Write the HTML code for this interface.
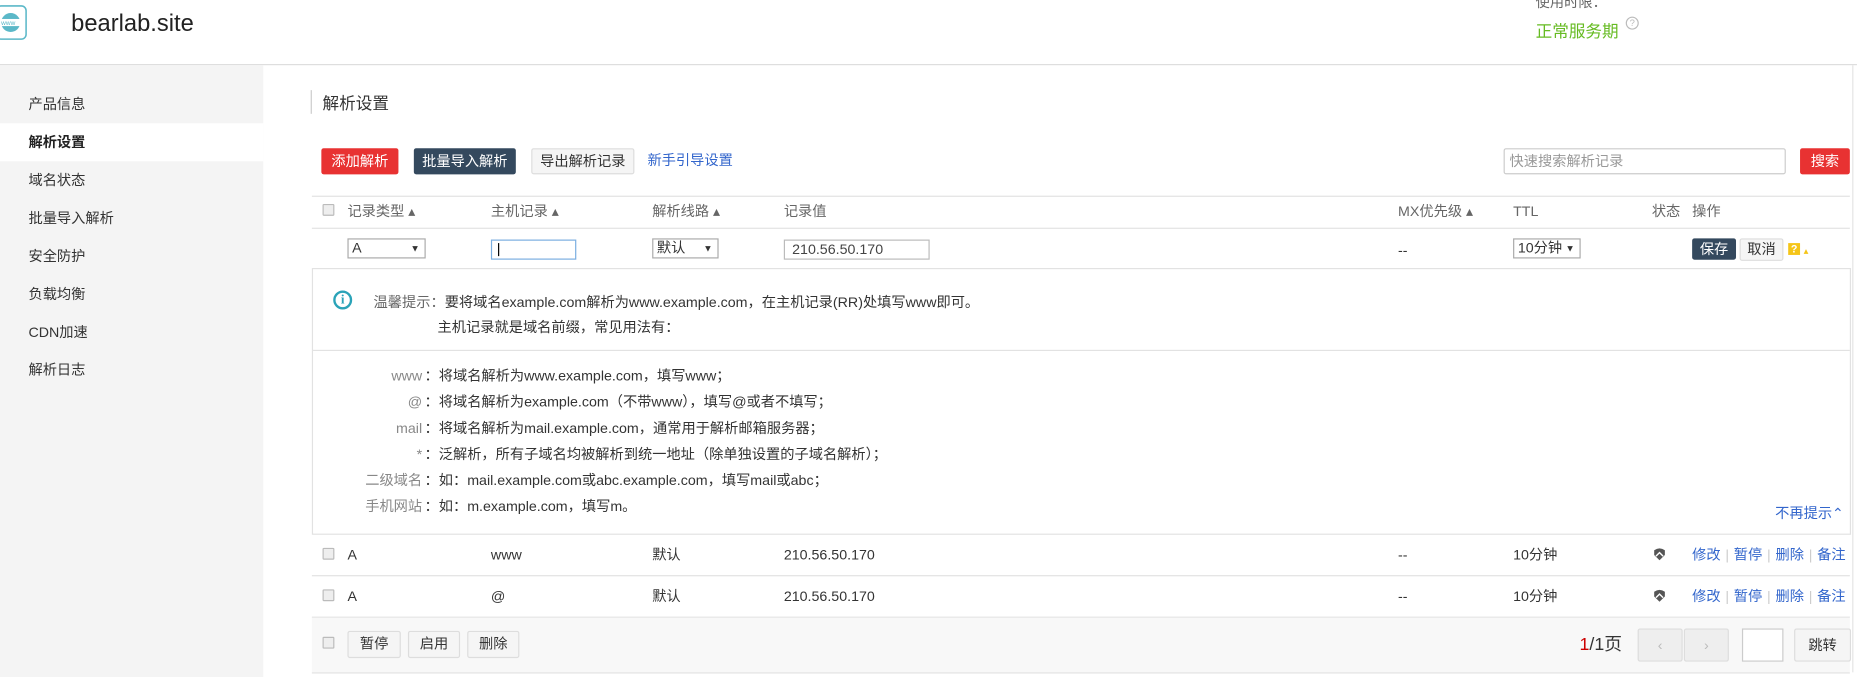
<!DOCTYPE html>
<html><head><meta charset="utf-8">
<style>
html,body{margin:0;padding:0;width:1857px;height:677px;overflow:hidden;background:#fff}
#w{position:absolute;left:0;top:0;width:1566px;height:571px;transform:scale(1.1858);transform-origin:0 0;font-family:"Liberation Sans","Noto Sans CJK SC",sans-serif;font-size:12px;line-height:16px;color:#333}
.a{position:absolute;white-space:nowrap}
.btn{position:absolute;height:22px;line-height:22px;text-align:center;border-radius:2px;font-size:12px}
.sel{position:absolute;height:15px;border:1px solid #aaa;background:#fff;font-size:12px;line-height:15px;padding-left:3px;box-sizing:content-box}
.sel:after{content:"▼";position:absolute;right:4px;top:0;font-size:8px}
.cb{position:absolute;width:8px;height:8px;border:1px solid #bbb;background:#eee;border-radius:1px}
.hl{position:absolute;left:263px;width:1297px;height:1px;background:#e2e2e2}
.g{color:#666}
.lk{color:#3366cc}
.sep{color:#ccc;margin:0 4px}
</style></head><body><div id="w">
<svg class="a" style="left:0;top:4px" width="24" height="30" viewBox="0 0 24 30"><rect x="-3" y="1" width="25" height="28" rx="4" fill="none" stroke="#5bb8c8" stroke-width="1.3"/><circle cx="9" cy="15" r="8" fill="#5bb8c8"/><rect x="0" y="12" width="18" height="6" fill="#fff"/><text x="1" y="17.3" font-size="5.5" fill="#5bb8c8" font-family="Liberation Sans">www</text></svg>
<div class="a" style="left:60px;top:8px;font-size:20px;line-height:24px;color:#222">bearlab.site</div>
<div class="a" style="left:1295px;top:-6px;font-size:12px;color:#666">使用时限：</div>
<div class="a" style="left:1295px;top:16px;font-size:14px;line-height:20px;color:#66bb22">正常服务期</div>
<div class="a" style="left:1371px;top:14px;width:9px;height:9px;border:1px solid #bbb;border-radius:50%;font-size:8px;line-height:9px;text-align:center;color:#bbb">?</div>
<div class="a" style="left:0;top:54px;width:1566px;height:1px;background:#ddd"></div>
<div class="a" style="left:0;top:55px;width:222px;height:516px;background:#f4f4f4"></div>
<div class="a" style="left:0;top:104px;width:222px;height:32px;background:#fff"></div>
<div class="a" style="left:24px;top:80px">产品信息</div>
<div class="a" style="left:24px;top:112px;font-weight:bold;color:#222">解析设置</div>
<div class="a" style="left:24px;top:144px">域名状态</div>
<div class="a" style="left:24px;top:176px">批量导入解析</div>
<div class="a" style="left:24px;top:208px">安全防护</div>
<div class="a" style="left:24px;top:240px">负载均衡</div>
<div class="a" style="left:24px;top:272px">CDN加速</div>
<div class="a" style="left:24px;top:304px">解析日志</div>
<div class="a" style="left:1562px;top:55px;width:1px;height:512px;background:#e5e5e5"></div>
<div class="a" style="left:262px;top:76px;width:1px;height:20px;background:#ccc"></div>
<div class="a" style="left:272px;top:77px;font-size:14px;line-height:20px;color:#333">解析设置</div>
<div class="btn" style="left:271px;top:125px;width:65px;background:#e83232;color:#fff">添加解析</div>
<div class="btn" style="left:349px;top:125px;width:86px;background:#34495e;color:#fff">批量导入解析</div>
<div class="btn" style="left:448px;top:125px;width:85px;height:20px;line-height:20px;background:#f5f5f5;border:1px solid #ddd">导出解析记录</div>
<div class="a lk" style="left:546px;top:127px">新手引导设置</div>
<div class="a" style="left:1268px;top:125px;width:238px;border:1px solid #ccc;border-radius:2px;color:#999;line-height:20px;padding-left:4px;box-sizing:border-box;height:22px">快速搜索解析记录</div>
<div class="btn" style="left:1518px;top:125px;width:42px;background:#e83232;color:#fff">搜索</div>
<div class="hl" style="top:165px"></div>
<div class="cb" style="left:272px;top:172px"></div>
<div class="a g" style="left:293px;top:170px">记录类型 ▴</div>
<div class="a g" style="left:414px;top:170px">主机记录 ▴</div>
<div class="a g" style="left:550px;top:170px">解析线路 ▴</div>
<div class="a g" style="left:661px;top:170px">记录值</div>
<div class="a g" style="left:1179px;top:170px">MX优先级 ▴</div>
<div class="a g" style="left:1276px;top:170px">TTL</div>
<div class="a g" style="left:1393px;top:170px">状态</div>
<div class="a g" style="left:1427px;top:170px">操作</div>
<div class="hl" style="top:192px"></div>
<div class="sel" style="left:293px;top:201px;width:61px">A</div>
<div class="a" style="left:414px;top:202px;width:70px;height:15px;border:1px solid #7aaee0"><div style="position:absolute;left:5px;top:2px;width:1px;height:11px;background:#000"></div></div>
<div class="sel" style="left:550px;top:201px;width:51px">默认</div>
<div class="a" style="left:661px;top:202px;width:115px;height:15px;border:1px solid #bbb;padding-left:6px;line-height:15px;color:#444">210.56.50.170</div>
<div class="a" style="left:1179px;top:203px">--</div>
<div class="sel" style="left:1276px;top:201px;width:52px">10分钟</div>
<div class="btn" style="left:1427px;top:201px;width:37px;height:18px;line-height:18px;background:#34495e;color:#fff">保存</div>
<div class="btn" style="left:1467px;top:201px;width:35px;height:17px;line-height:17px;background:#f5f5f5;border:1px solid #ddd">取消</div>
<div class="a" style="left:1508px;top:205px;width:10px;height:10px;background:#f5c518;color:#fff;font-size:9px;line-height:10px;text-align:center;font-weight:bold">?</div>
<div class="a" style="left:1521px;top:204px;font-size:8px;color:#f5c518">▴</div>
<div class="a" style="left:263px;top:226px;width:1296px;height:223px;border:1px solid #e2e2e2"></div>
<div class="a" style="left:264px;top:295px;width:1296px;height:1px;background:#e2e2e2"></div>
<div class="a" style="left:281px;top:245px;width:16px;height:16px;border:2px solid #2aa3b8;border-radius:50%;box-sizing:border-box;color:#2aa3b8;font-weight:bold;font-size:11px;line-height:12px;text-align:center;font-family:'Liberation Serif',serif">i</div>
<div class="a" style="left:315px;top:247px"><span class="g">温馨提示：</span>要将域名example.com解析为www.example.com，在主机记录(RR)处填写www即可。</div>
<div class="a" style="left:369px;top:268px">主机记录就是域名前缀，常见用法有：</div>
<div class="a" style="left:250px;width:106px;text-align:right;top:309px;color:#888">www</div><div class="a" style="left:358px;top:309px">：将域名解析为www.example.com，填写www；</div>
<div class="a" style="left:250px;width:106px;text-align:right;top:331px;color:#888">@</div><div class="a" style="left:358px;top:331px">：将域名解析为example.com（不带www），填写@或者不填写；</div>
<div class="a" style="left:250px;width:106px;text-align:right;top:353px;color:#888">mail</div><div class="a" style="left:358px;top:353px">：将域名解析为mail.example.com，通常用于解析邮箱服务器；</div>
<div class="a" style="left:250px;width:106px;text-align:right;top:375px;color:#888">*</div><div class="a" style="left:358px;top:375px">：泛解析，所有子域名均被解析到统一地址（除单独设置的子域名解析）；</div>
<div class="a" style="left:250px;width:106px;text-align:right;top:397px;color:#888">二级域名</div><div class="a" style="left:358px;top:397px">：如：mail.example.com或abc.example.com，填写mail或abc；</div>
<div class="a" style="left:250px;width:106px;text-align:right;top:419px;color:#888">手机网站</div><div class="a" style="left:358px;top:419px">：如：m.example.com，填写m。</div>
<div class="a lk" style="left:1497px;top:425px">不再提示⌃</div>
<div class="cb" style="left:272px;top:462px"></div>
<div class="a" style="left:293px;top:460px">A</div><div class="a" style="left:414px;top:460px">www</div><div class="a" style="left:550px;top:460px">默认</div><div class="a" style="left:661px;top:460px">210.56.50.170</div><div class="a" style="left:1179px;top:460px">--</div><div class="a" style="left:1276px;top:460px">10分钟</div>
<svg class="a" style="left:1394px;top:462px" width="11" height="11" viewBox="0 0 11 11"><path d="M1 2 Q5.5 -1 10 2 L10 6 L5.5 10.5 L1 6Z" fill="#555"/><path d="M2.5 7 L5.5 4 L8.5 7" fill="none" stroke="#fff" stroke-width="1.2"/></svg>
<div class="a lk" style="left:1427px;top:460px">修改<span class="sep">|</span>暂停<span class="sep">|</span>删除<span class="sep">|</span>备注</div>
<div class="hl" style="top:485px"></div>
<div class="cb" style="left:272px;top:497px"></div>
<div class="a" style="left:293px;top:495px">A</div><div class="a" style="left:414px;top:495px">@</div><div class="a" style="left:550px;top:495px">默认</div><div class="a" style="left:661px;top:495px">210.56.50.170</div><div class="a" style="left:1179px;top:495px">--</div><div class="a" style="left:1276px;top:495px">10分钟</div>
<svg class="a" style="left:1394px;top:497px" width="11" height="11" viewBox="0 0 11 11"><path d="M1 2 Q5.5 -1 10 2 L10 6 L5.5 10.5 L1 6Z" fill="#555"/><path d="M2.5 7 L5.5 4 L8.5 7" fill="none" stroke="#fff" stroke-width="1.2"/></svg>
<div class="a lk" style="left:1427px;top:495px">修改<span class="sep">|</span>暂停<span class="sep">|</span>删除<span class="sep">|</span>备注</div>
<div class="hl" style="top:520px"></div>
<div class="a" style="left:263px;top:521px;width:1297px;height:46px;background:#f8f8f8"></div>
<div class="hl" style="top:567px"></div>
<div class="cb" style="left:272px;top:537px"></div>
<div class="btn" style="left:293px;top:532px;width:43px;height:21px;line-height:21px;background:#f5f5f5;border:1px solid #ddd">暂停</div>
<div class="btn" style="left:344px;top:532px;width:42px;height:21px;line-height:21px;background:#f5f5f5;border:1px solid #ddd">启用</div>
<div class="btn" style="left:394px;top:532px;width:42px;height:21px;line-height:21px;background:#f5f5f5;border:1px solid #ddd">删除</div>
<div class="a" style="left:1332px;top:535px;font-size:15px;line-height:18px"><span style="color:#c00">1</span>/1页</div>
<div class="btn" style="left:1381px;top:530px;width:36px;height:26px;line-height:26px;background:#eee;border:1px solid #ddd;color:#bbb">‹</div>
<div class="btn" style="left:1420px;top:530px;width:36px;height:26px;line-height:26px;background:#eee;border:1px solid #ddd;color:#bbb">›</div>
<div class="a" style="left:1469px;top:530px;width:33px;height:26px;border:1px solid #ccc;background:#fff"></div>
<div class="btn" style="left:1513px;top:530px;width:46px;height:26px;line-height:26px;background:#f5f5f5;border:1px solid #ddd">跳转</div>
</div></body></html>
